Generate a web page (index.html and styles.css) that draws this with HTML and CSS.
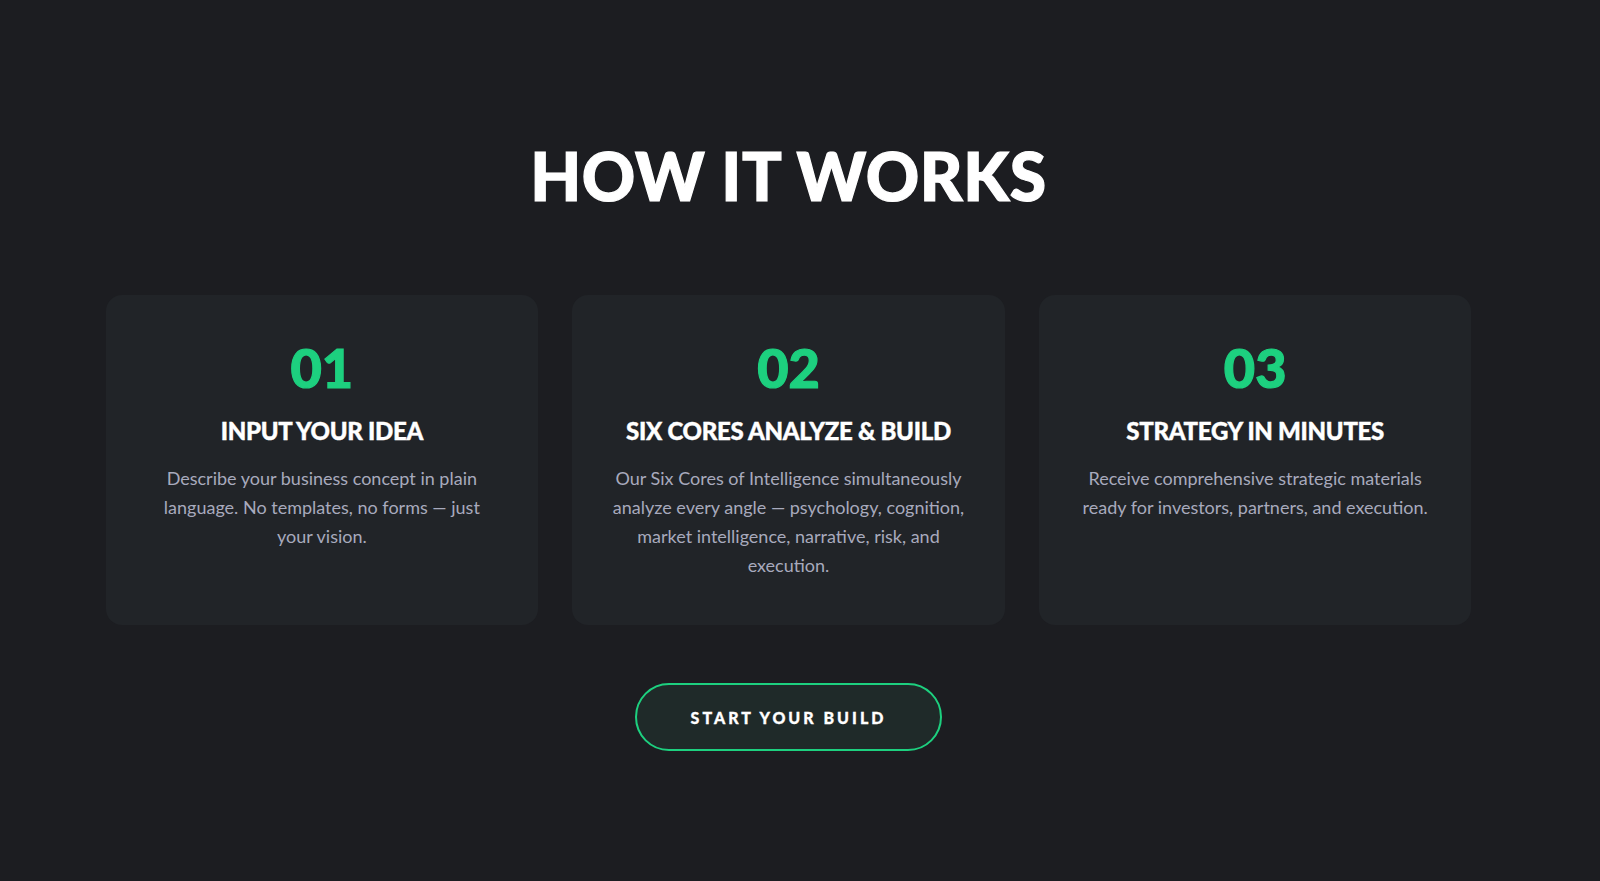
FILE: index.html
```html
<!DOCTYPE html>
<html lang="en">
<head>
<meta charset="utf-8">
<title>How It Works</title>
<link rel="stylesheet" href="styles.css">
</head>
<body>
<section class="how">
  <div class="wrap">
    <h2 class="how-title">HOW IT WORKS</h2>
    <div class="steps">
      <div class="step">
        <div class="step-num">01</div>
        <h3 class="step-title">INPUT YOUR IDEA</h3>
        <p class="step-text">Describe your business concept in plain language. No templates, no forms — just your vision.</p>
      </div>
      <div class="step">
        <div class="step-num">02</div>
        <h3 class="step-title">SIX CORES ANALYZE &amp; BUILD</h3>
        <p class="step-text">Our Six Cores of Intelligence simultaneously analyze every angle — psychology, cognition, market intelligence, narrative, risk, and execution.</p>
      </div>
      <div class="step">
        <div class="step-num">03</div>
        <h3 class="step-title">STRATEGY IN MINUTES</h3>
        <p class="step-text">Receive comprehensive strategic materials ready for investors, partners, and execution.</p>
      </div>
    </div>
    <div class="cta-row">
      <a class="cta" href="#">START YOUR BUILD</a>
    </div>
  </div>
</section>
</body>
</html>
```

FILE: styles.css
```css
* { box-sizing: border-box; }
html, body {
  margin: 0;
  padding: 0;
  background: #1c1d21;
}
body {
  font-family: "Lato", "Inter", sans-serif;
  color: #fff;
  min-height: 881px;
}
.how {
  padding: 136px 23px 0 0;
}
.wrap {
  width: 1366px;
  margin: 0 auto;
}
.how-title {
  margin: 0;
  text-align: center;
  font-family: "Lato Black", "Lato", sans-serif;
  font-size: 66px;
  line-height: 1.2;
  font-weight: 900;
  letter-spacing: 0.6px;
  color: #fff;
  -webkit-text-stroke: 1.2px #fff;
}
.steps {
  margin-top: 80px;
  display: grid;
  grid-template-columns: repeat(3, 1fr);
  gap: 34px;
}
.step {
  background: #212428;
  border-radius: 16px;
  padding: 46px 40px 45px;
  text-align: center;
  min-height: 330px;
}
.step-num {
  font-family: "Lato Black", "Lato", sans-serif;
  font-size: 54px;
  line-height: 1;
  font-weight: 900;
  color: #1dd07f;
  -webkit-text-stroke: 1.2px #1dd07f;
}
.step-title {
  margin: 20px 0 0;
  font-family: "Lato Black", "Lato", sans-serif;
  font-size: 24px;
  line-height: 1.3;
  font-weight: 900;
  color: #fff;
  letter-spacing: -0.3px;
  -webkit-text-stroke: 0.4px #fff;
}
.step-text {
  margin: 18px auto 0;
  max-width: 372px;
  font-size: 18px;
  line-height: 29px;
  color: #a8aabd;
}
.cta-row {
  display: flex;
  justify-content: center;
  margin-top: 58px;
}
.cta {
  display: flex;
  align-items: center;
  justify-content: center;
  width: 307px;
  height: 68px;
  border: 2px solid #1dd07f;
  border-radius: 34px;
  background: #1f2a29;
  color: #fff;
  text-decoration: none;
  font-family: "Lato Black", "Lato", sans-serif;
  font-size: 16px;
  font-weight: 900;
  letter-spacing: 3px;
  -webkit-text-stroke: 0.3px #fff;
}
```
